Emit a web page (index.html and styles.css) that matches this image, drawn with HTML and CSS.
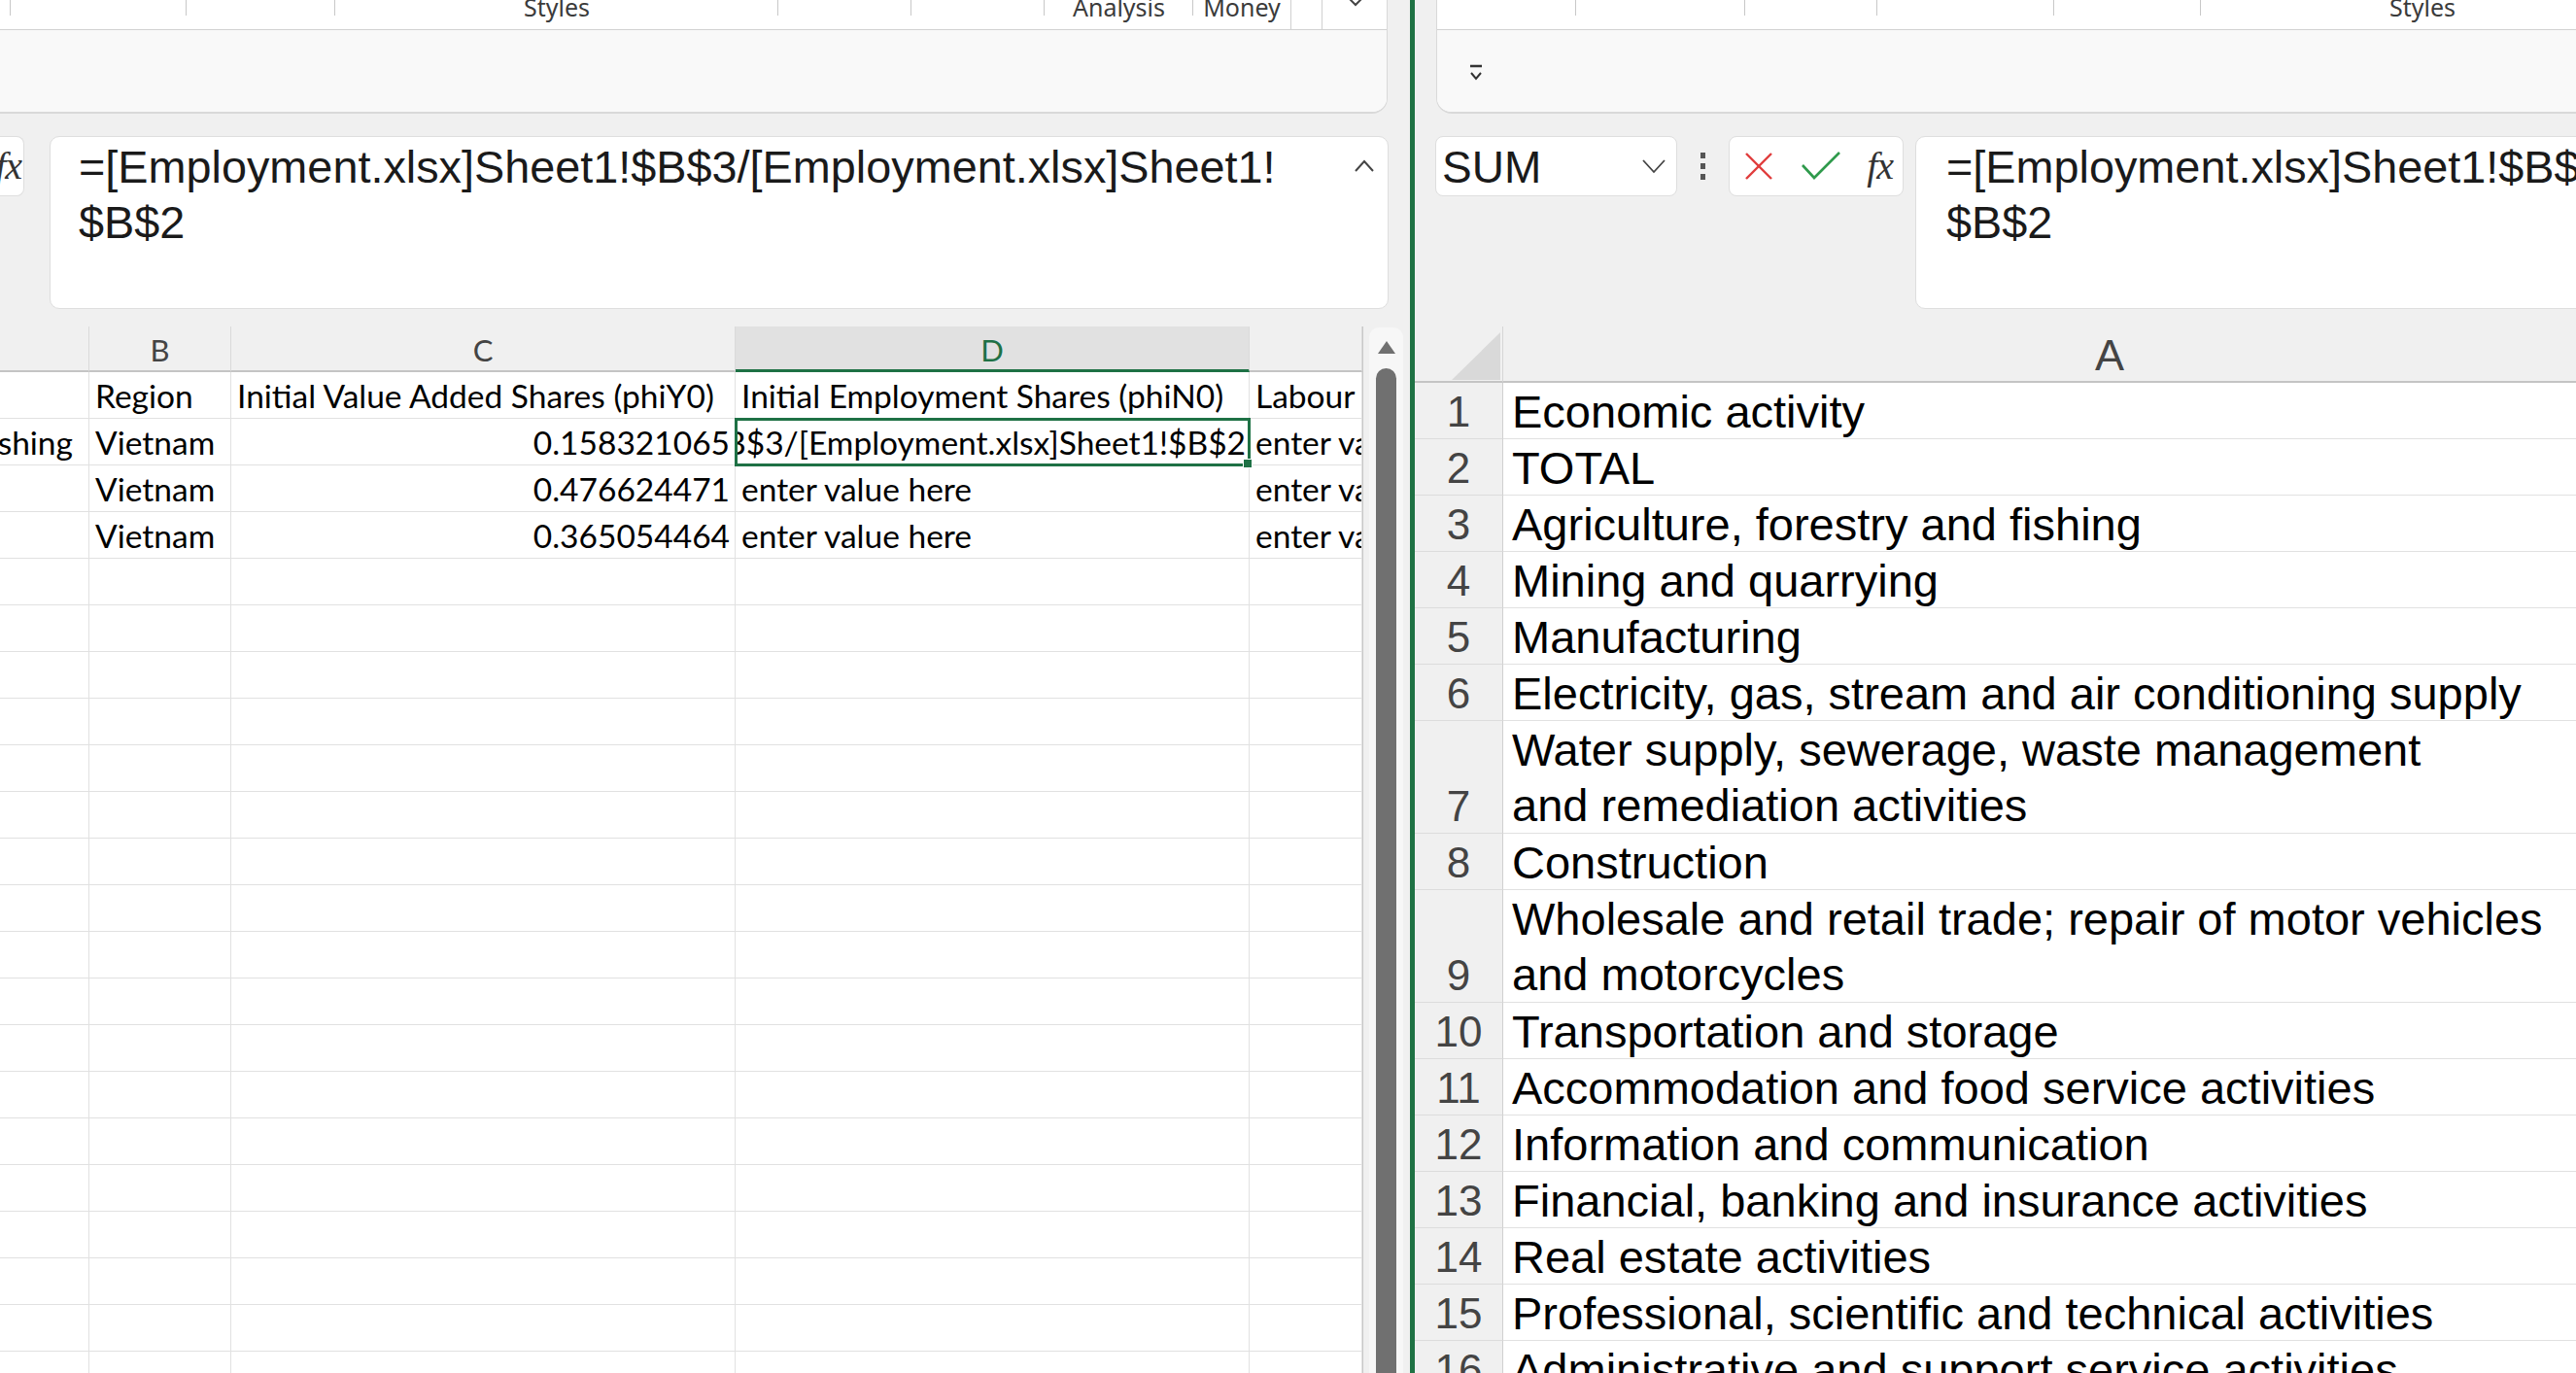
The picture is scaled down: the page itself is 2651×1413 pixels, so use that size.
FILE: index.html
```html
<!DOCTYPE html>
<html lang="en">
<head>
<meta charset="utf-8">
<title>Excel split view</title>
<link rel="stylesheet" href="styles.css">
</head>
<body>
<div class="app">
  <section class="pane pane-left">
    <header class="ribbon ribbon-l">
      <div class="strip">
        <div class="grp w11"></div>
        <div class="grp w181"></div>
        <div class="grp w153"></div>
        <div class="grp w456"><span class="lbl">Styles</span></div>
        <div class="grp w137"></div>
        <div class="grp w137"></div>
        <div class="grp w153"><span class="lbl">Analysis</span></div>
        <div class="grp w101 full"><span class="lbl">Money</span></div>
        <div class="grp w32 full"></div>
        <div class="grp w67 chev-top">
          <svg width="22" height="10" viewBox="0 0 22 10"><polyline points="2,-4 11,5 20,-4" fill="none" stroke="#444" stroke-width="2"/></svg>
        </div>
      </div>
      <div class="qat"></div>
    </header>

    <div class="fbar fbar-l">
      <div class="fxbox fxbox-l"><span class="fx">fx</span></div>
      <div class="formula formula-l">
        <div class="ftext">=[Employment.xlsx]Sheet1!$B$3/[Employment.xlsx]Sheet1!<br>$B$2</div>
        <svg class="collapse" width="24" height="16" viewBox="0 0 24 16"><polyline points="3,13 12,3 21,13" fill="none" stroke="#444" stroke-width="2"/></svg>
      </div>
    </div>

    <div class="sheet-l">
      <div class="grid-l">
        <div class="ch"></div>
        <div class="ch">B</div>
        <div class="ch">C</div>
        <div class="ch sel">D</div>
        <div class="ch"></div>

        <div class="c"></div>
        <div class="c">Region</div>
        <div class="c">Initial Value Added Shares (phiY0)</div>
        <div class="c">Initial Employment Shares (phiN0)</div>
        <div class="c">Labour</div>

        <div class="c end clipA">Agriculture, forestry and fishing</div>
        <div class="c">Vietnam</div>
        <div class="c num">0.158321065</div>
        <div class="c active"><div class="clip">=[Employment.xlsx]Sheet1!$B$3/[Employment.xlsx]Sheet1!$B$2</div></div>
        <div class="c">enter value here</div>

        <div class="c"></div>
        <div class="c">Vietnam</div>
        <div class="c num">0.476624471</div>
        <div class="c">enter value here</div>
        <div class="c">enter value here</div>

        <div class="c"></div>
        <div class="c">Vietnam</div>
        <div class="c num">0.365054464</div>
        <div class="c">enter value here</div>
        <div class="c">enter value here</div>

        <div class="c"></div><div class="c"></div><div class="c"></div><div class="c"></div><div class="c"></div>
        <div class="c"></div><div class="c"></div><div class="c"></div><div class="c"></div><div class="c"></div>
        <div class="c"></div><div class="c"></div><div class="c"></div><div class="c"></div><div class="c"></div>
        <div class="c"></div><div class="c"></div><div class="c"></div><div class="c"></div><div class="c"></div>
        <div class="c"></div><div class="c"></div><div class="c"></div><div class="c"></div><div class="c"></div>
        <div class="c"></div><div class="c"></div><div class="c"></div><div class="c"></div><div class="c"></div>
        <div class="c"></div><div class="c"></div><div class="c"></div><div class="c"></div><div class="c"></div>
        <div class="c"></div><div class="c"></div><div class="c"></div><div class="c"></div><div class="c"></div>
        <div class="c"></div><div class="c"></div><div class="c"></div><div class="c"></div><div class="c"></div>
        <div class="c"></div><div class="c"></div><div class="c"></div><div class="c"></div><div class="c"></div>
        <div class="c"></div><div class="c"></div><div class="c"></div><div class="c"></div><div class="c"></div>
        <div class="c"></div><div class="c"></div><div class="c"></div><div class="c"></div><div class="c"></div>
        <div class="c"></div><div class="c"></div><div class="c"></div><div class="c"></div><div class="c"></div>
        <div class="c"></div><div class="c"></div><div class="c"></div><div class="c"></div><div class="c"></div>
        <div class="c"></div><div class="c"></div><div class="c"></div><div class="c"></div><div class="c"></div>
        <div class="c"></div><div class="c"></div><div class="c"></div><div class="c"></div><div class="c"></div>
        <div class="c"></div><div class="c"></div><div class="c"></div><div class="c"></div><div class="c"></div>
        <div class="c"></div><div class="c"></div><div class="c"></div><div class="c"></div><div class="c"></div>
      </div>
      <div class="vscroll">
        <div class="track">
          <svg class="arrow-up" width="22" height="16" viewBox="0 0 22 16"><polygon points="2,15 11,2 20,15" fill="#707070"/></svg>
          <div class="thumb"></div>
        </div>
      </div>
    </div>
  </section>

  <div class="divider"></div>

  <section class="pane pane-right">
    <header class="ribbon ribbon-r">
      <div class="strip">
        <div class="grp w143"></div>
        <div class="grp w174"></div>
        <div class="grp w136"></div>
        <div class="grp w182"></div>
        <div class="grp w151"></div>
        <div class="grp w456"><span class="lbl">Styles</span></div>
      </div>
      <div class="qat qat-r">
        <svg class="qat-icon" width="22" height="20" viewBox="0 0 22 20"><line x1="5" y1="2" x2="17" y2="2" stroke="#333" stroke-width="2.5"/><polyline points="6,9 11,15 16,9" fill="none" stroke="#333" stroke-width="2"/></svg>
      </div>
    </header>

    <div class="fbar fbar-r">
      <div class="namebox">
        <span class="name">SUM</span>
        <svg width="26" height="16" viewBox="0 0 26 16"><polyline points="2,2 13,14 24,2" fill="none" stroke="#444" stroke-width="1.8"/></svg>
      </div>
      <div class="dots">
        <svg width="8" height="28" viewBox="0 0 8 28"><rect x="1" y="0" width="5" height="6" fill="#555"/><rect x="1" y="11" width="5" height="6" fill="#555"/><rect x="1" y="22" width="5" height="6" fill="#555"/></svg>
      </div>
      <div class="btnbox">
        <svg width="32" height="30" viewBox="0 0 32 30"><line x1="3" y1="2" x2="29" y2="28" stroke="#e03c3c" stroke-width="2.4"/><line x1="29" y1="2" x2="3" y2="28" stroke="#e03c3c" stroke-width="2.4"/></svg>
        <svg width="42" height="30" viewBox="0 0 42 30"><polyline points="2,14 14,27 40,1" fill="none" stroke="#2f9a4c" stroke-width="2.6"/></svg>
        <span class="fx">fx</span>
      </div>
      <div class="formula formula-r">
        <div class="ftext">=[Employment.xlsx]Sheet1!$B$3/[Employment.xlsx]Sheet1!<br>$B$2</div>
      </div>
    </div>

    <div class="sheet-r">
      <div class="grid-r">
        <div class="corner"><svg width="91" height="58" viewBox="0 0 91 58"><polygon points="38,55 88,6 88,55" fill="#d9d9d9"/></svg></div>
        <div class="colA">A</div>

        <div class="rh">1</div><div class="ca">Economic activity</div>
        <div class="rh">2</div><div class="ca">TOTAL</div>
        <div class="rh">3</div><div class="ca">Agriculture, forestry and fishing</div>
        <div class="rh">4</div><div class="ca">Mining and quarrying</div>
        <div class="rh">5</div><div class="ca">Manufacturing</div>
        <div class="rh">6</div><div class="ca">Electricity, gas, stream and air conditioning supply</div>
        <div class="rh tall">7</div><div class="ca tall wrap">Water supply, sewerage, waste management<br>and remediation activities</div>
        <div class="rh">8</div><div class="ca">Construction</div>
        <div class="rh tall">9</div><div class="ca tall wrap">Wholesale and retail trade; repair of motor vehicles<br>and motorcycles</div>
        <div class="rh">10</div><div class="ca">Transportation and storage</div>
        <div class="rh">11</div><div class="ca">Accommodation and food service activities</div>
        <div class="rh">12</div><div class="ca">Information and communication</div>
        <div class="rh">13</div><div class="ca">Financial, banking and insurance activities</div>
        <div class="rh">14</div><div class="ca">Real estate activities</div>
        <div class="rh">15</div><div class="ca">Professional, scientific and technical activities</div>
        <div class="rh">16</div><div class="ca">Administrative and support service activities</div>
      </div>
    </div>
  </section>
</div>
</body>
</html>
```

FILE: styles.css
```css
* { box-sizing: border-box; }

html, body {
  margin: 0;
  padding: 0;
}

body {
  width: 2651px;
  height: 1413px;
  overflow: hidden;
  background: #f0f0f0;
  font-family: "Liberation Sans", Arial, sans-serif;
  color: #000;
}

.app {
  display: flex;
  height: 1413px;
}

.pane {
  display: flex;
  flex-direction: column;
  overflow: hidden;
  background: #f0f0f0;
}

.pane-left {
  width: 1451px;
  flex: none;
}

.pane-right {
  flex: 1;
  min-width: 0;
}

.divider {
  width: 5px;
  flex: none;
  background: #1f7244;
}

/* ---------- ribbon ---------- */
.ribbon {
  height: 117px;
  flex: none;
  display: flex;
  flex-direction: column;
  background: #fff;
  border-bottom: 2px solid #d9d9d9;
}

.ribbon-l {
  margin-right: 23px;
  border-right: 1px solid #d9d9d9;
  border-bottom-right-radius: 16px;
  overflow: hidden;
}

.ribbon-r {
  margin-left: 22px;
  margin-right: -40px;
  border-left: 1px solid #d9d9d9;
  border-bottom-left-radius: 16px;
  overflow: hidden;
}

.strip {
  height: 31px;
  flex: none;
  display: flex;
  background: #fff;
  border-bottom: 1px solid #d2d2d2;
}

.grp {
  flex: none;
  height: 100%;
  display: flex;
  justify-content: center;
  background: linear-gradient(#c8c8c8, #c8c8c8) right top / 1px 16px no-repeat;
}

.grp.full {
  background: none;
  border-right: 1px solid #d0d0d0;
}

.chev-top {
  background: none;
  align-items: flex-start;
}

.w11 { width: 11px; }
.w32 { width: 32px; }
.w67 { width: 67px; }
.w101 { width: 101px; }
.w136 { width: 136px; }
.w137 { width: 137px; }
.w143 { width: 143px; }
.w151 { width: 151px; }
.w153 { width: 153px; }
.w174 { width: 174px; }
.w181 { width: 181px; }
.w182 { width: 182px; }
.w456 { width: 456px; }

.lbl {
  font-family: "Noto Sans", "Open Sans", sans-serif;
  font-size: 25px;
  line-height: 26px;
  margin-top: -6px;
  color: #3b3b3b;
  white-space: nowrap;
}

.qat {
  flex: 1;
  background: #f9f9f9;
}

.qat-r {
  display: flex;
  align-items: center;
  padding-left: 29px;
  padding-top: 6px;
}

/* ---------- formula bar ---------- */
.fbar {
  flex: none;
  display: flex;
  align-items: flex-start;
  margin-top: 23px;
  height: 178px;
}

.fxbox {
  height: 62px;
  background: #fff;
  border: 1px solid #dedede;
  border-radius: 8px;
  display: flex;
  align-items: center;
}

.fxbox-l {
  width: 25px;
  justify-content: flex-end;
  border-left: none;
  border-top-left-radius: 0;
  border-bottom-left-radius: 0;
  overflow: hidden;
  padding-right: 2px;
}

.fx {
  font-family: "Liberation Serif", "Times New Roman", serif;
  font-style: italic;
  font-size: 40px;
  line-height: 40px;
  color: #333;
  white-space: nowrap;
  letter-spacing: -1px;
}

.formula {
  height: 178px;
  background: #fff;
  border: 1px solid #dedede;
  border-radius: 10px;
  display: flex;
  align-items: flex-start;
}

.formula-l {
  width: 1378px;
  margin-left: 26px;
  padding: 3px 0 0 29px;
  justify-content: space-between;
}

.formula-r {
  flex: 1;
  margin-left: 12px;
  margin-right: -40px;
  padding: 3px 0 0 31px;
  border-top-right-radius: 0;
  border-bottom-right-radius: 0;
  overflow: hidden;
}

.ftext {
  font-family: "Liberation Sans", Arial, sans-serif;
  font-size: 46.8px;
  line-height: 57px;
  color: #1a1a1a;
  white-space: nowrap;
}

.collapse {
  margin-top: 19px;
  margin-right: 12px;
}

.fbar-r {
  padding-left: 21px;
}

.namebox {
  width: 249px;
  height: 62px;
  flex: none;
  background: #fff;
  border: 1px solid #dedede;
  border-radius: 8px;
  display: flex;
  align-items: center;
  justify-content: space-between;
  padding: 0 10px 0 6px;
}

.name {
  font-size: 46px;
  line-height: 52px;
  color: #1a1a1a;
  margin-top: 2px;
}

.dots {
  width: 53px;
  height: 62px;
  flex: none;
  display: flex;
  align-items: center;
  justify-content: center;
}

.btnbox {
  width: 180px;
  height: 62px;
  flex: none;
  background: #fff;
  border: 1px solid #dedede;
  border-radius: 8px;
  display: flex;
  align-items: center;
  justify-content: space-between;
  padding: 0 10px 0 14px;
}

/* ---------- left sheet ---------- */
.sheet-l {
  flex: 1;
  display: flex;
  margin-top: 18px;
  min-height: 0;
}

.grid-l {
  width: 1403px;
  flex: none;
  display: grid;
  grid-template-columns: 92px 146px 519px 529px 116px;
  grid-template-rows: 47px;
  grid-auto-rows: 48px;
  border-right: 1px solid #c8c8c8;
  background: #fff;
  font-family: Lato, "Open Sans", sans-serif;
  font-size: 33.5px;
  overflow: hidden;
}

.ch {
  background: #f0f0f0;
  border-bottom: 2px solid #c4c4c4;
  border-right: 1px solid #dadada;
  display: flex;
  align-items: flex-end;
  justify-content: center;
  font-size: 31px;
  line-height: 36px;
  padding-bottom: 3px;
  color: #444;
}

.ch.sel {
  background: #e1e1e1;
  color: #1e7145;
  border-bottom: 3px solid #1e7145;
  padding-bottom: 2px;
}

.c {
  border-right: 1px solid #e1e1e1;
  border-bottom: 1px solid #e1e1e1;
  display: flex;
  align-items: flex-end;
  padding: 0 5px 4px 6px;
  line-height: 38px;
  white-space: nowrap;
  overflow: hidden;
  min-width: 0;
}

.c.num { justify-content: flex-end; }
.c.end { justify-content: flex-end; }
.c.clipA { padding-right: 16px; }

.c.active {
  position: relative;
  overflow: visible;
  outline: 3px solid #1e7145;
  outline-offset: -2px;
  padding: 0 3px 4px 2px;
}

.clip {
  width: 100%;
  display: flex;
  justify-content: flex-end;
  overflow: hidden;
  white-space: nowrap;
}

.c.active::after {
  content: "";
  position: absolute;
  right: -4px;
  bottom: -4px;
  width: 8px;
  height: 8px;
  background: #1e7145;
  border: 1px solid #fff;
}

.vscroll {
  flex: 1;
  background: #f0f0f0;
  padding: 1px 7px 0 6px;
}

.track {
  height: 100%;
  background: #f7f7f7;
  border-radius: 10px 10px 0 0;
  display: flex;
  flex-direction: column;
  align-items: center;
  padding: 12px 0 0;
}

.thumb {
  width: 21px;
  flex: 1;
  margin-top: 14px;
  background: #707070;
  border-radius: 11px 11px 0 0;
}

/* ---------- right sheet ---------- */
.sheet-r {
  flex: 1;
  margin-top: 18px;
  min-height: 0;
  overflow: hidden;
}

.grid-r {
  display: grid;
  grid-template-columns: 91px 1248px;
  grid-template-rows: 58px;
  grid-auto-rows: 58px;
}

.corner {
  background: #f0f0f0;
  border-bottom: 2px solid #c4c4c4;
  border-right: 1px solid #d6d6d6;
}

.corner svg { display: block; }

.colA {
  background: #f0f0f0;
  border-bottom: 2px solid #c4c4c4;
  display: flex;
  align-items: flex-end;
  justify-content: center;
  font-size: 45px;
  line-height: 52px;
  color: #444;
}

.rh {
  background: #f0f0f0;
  border-right: 1px solid #d0d0d0;
  border-bottom: 1px solid #dcdcdc;
  display: flex;
  align-items: flex-end;
  justify-content: center;
  font-size: 44px;
  line-height: 54px;
  color: #444;
}

.ca {
  background: #fff;
  border-bottom: 1px solid #e1e1e1;
  display: flex;
  align-items: flex-end;
  padding-left: 9px;
  font-size: 47px;
  line-height: 54px;
  white-space: nowrap;
  color: #000;
}

.tall { grid-row: span 2; }

.ca.wrap {
  line-height: 57px;
}
```
